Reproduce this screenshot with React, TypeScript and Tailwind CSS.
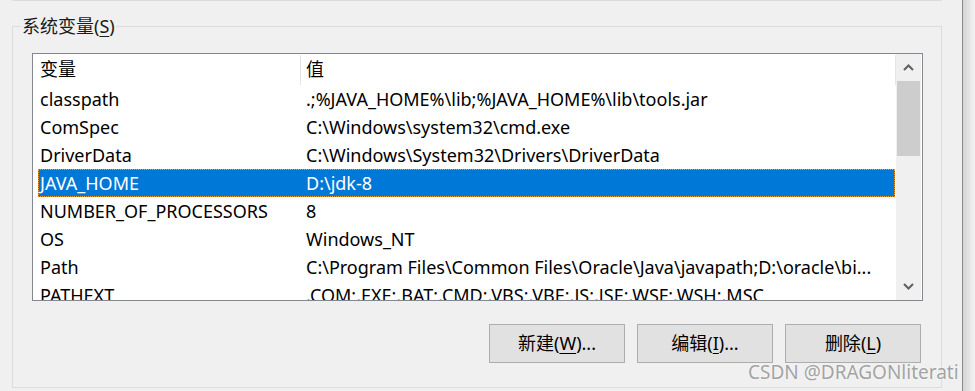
import React from "react";

const rows: [string, string][] = [
  ["classpath", ".;%JAVA_HOME%\\lib;%JAVA_HOME%\\lib\\tools.jar"],
  ["ComSpec", "C:\\Windows\\system32\\cmd.exe"],
  ["DriverData", "C:\\Windows\\System32\\Drivers\\DriverData"],
  ["JAVA_HOME", "D:\\jdk-8"],
  ["NUMBER_OF_PROCESSORS", "8"],
  ["OS", "Windows_NT"],
  ["Path", "C:\\Program Files\\Common Files\\Oracle\\Java\\javapath;D:\\oracle\\bi..."],
  ["PATHEXT", ".COM;.EXE;.BAT;.CMD;.VBS;.VBE;.JS;.JSE;.WSF;.WSH;.MSC"],
];

function Chevron({ up }: { up?: boolean }) {
  return (
    <svg width="11" height="7" viewBox="0 0 11 7">
      <path
        d={up ? "M1 6 L5.5 1.5 L10 6" : "M1 1 L5.5 5.5 L10 1"}
        fill="none"
        stroke="#606060"
        strokeWidth="2"
      />
    </svg>
  );
}

function Btn({ pre, key1, post }: { pre: string; key1: string; post: string }) {
  return (
    <div className="w-[136px] h-[39px] bg-[#e1e1e1] border border-[#adadad] flex items-center justify-center text-[18px] text-black">
      <span>
        {pre}(<span className="underline underline-offset-[3px]">{key1}</span>){post}
      </span>
    </div>
  );
}

export default function App() {
  return (
    <div
      className="w-[975px] h-[391px] bg-[#f0f0f0] flex overflow-hidden"
      style={{ fontFamily: '"Noto Sans", "Noto Sans CJK SC", sans-serif' }}
    >
      <div className="w-[962px] h-full relative overflow-hidden">
        <div className="ml-[12px] w-[930px] h-px bg-[#dcdcdc]" />
        <div className="mt-[25px] ml-[12px] w-[930px] h-[362px] border border-[#dcdcdc] flex flex-col">
          <div className="-mt-[12px] h-[22px] ml-[8px] px-[1px] w-fit bg-[#f0f0f0] text-[18px] leading-[22px] text-[#1a1a1a]">
            系统变量(<span className="underline underline-offset-[3px]">S</span>)
          </div>
          <div className="mt-[16px] ml-[19px] w-[891px] h-[248px] border border-[#828790] bg-white flex">
            <div className="w-[863px] h-full overflow-hidden flex flex-col">
              <div className="h-[31px] shrink-0 flex items-stretch text-[18px] text-black">
                <div className="w-[267px] pl-[7px] flex items-center">变量</div>
                <div className="w-px mt-px bg-[#e5e5e5]" />
                <div className="w-[594px] pl-[5px] flex items-center">值</div>
                <div className="w-px mt-px bg-[#e5e5e5]" />
              </div>
              {rows.map(([k, v]) => {
                const sel = k === "JAVA_HOME";
                return (
                  <div
                    key={k}
                    className={
                      "h-[28px] shrink-0 ml-[5px] w-[857px] flex items-center text-[18px] whitespace-nowrap " +
                      (sel
                        ? "bg-[#0078d7] text-white border border-dotted border-[#f09a30]"
                        : "text-black border border-transparent")
                    }
                  >
                    <div className="w-[266px] pl-[1px]">{k}</div>
                    <div className="pl-[1px]">{v}</div>
                  </div>
                );
              })}
            </div>
            <div className="w-[25px] h-full bg-[#f0f0f0] flex flex-col">
              <div className="h-[27px] flex items-center justify-center">
                <Chevron up />
              </div>
              <div className="h-[75px] mx-px bg-[#cdcdcd]" />
              <div className="flex-1" />
              <div className="h-[27px] flex items-center justify-center">
                <Chevron />
              </div>
            </div>
          </div>
          <div className="mt-[23px] ml-[476px] flex gap-[12px]">
            <Btn pre="新建" key1="W" post="..." />
            <Btn pre="编辑" key1="I" post="..." />
            <Btn pre="删除" key1="L" post="" />
          </div>
        </div>
        <div
          className="absolute left-[748px] top-[363px] text-[19px] leading-[19px] text-[#a3a3a3] whitespace-nowrap"
          style={{ textShadow: "0 0 2px #ffffff" }}
        >
          CSDN @DRAGONliterati
        </div>
      </div>
      <div className="w-px h-full bg-[#8a8a8a]" />
      <div className="flex-1 h-full bg-gradient-to-r from-[#d4d4d4] to-[#f4f4f4]" />
    </div>
  );
}
